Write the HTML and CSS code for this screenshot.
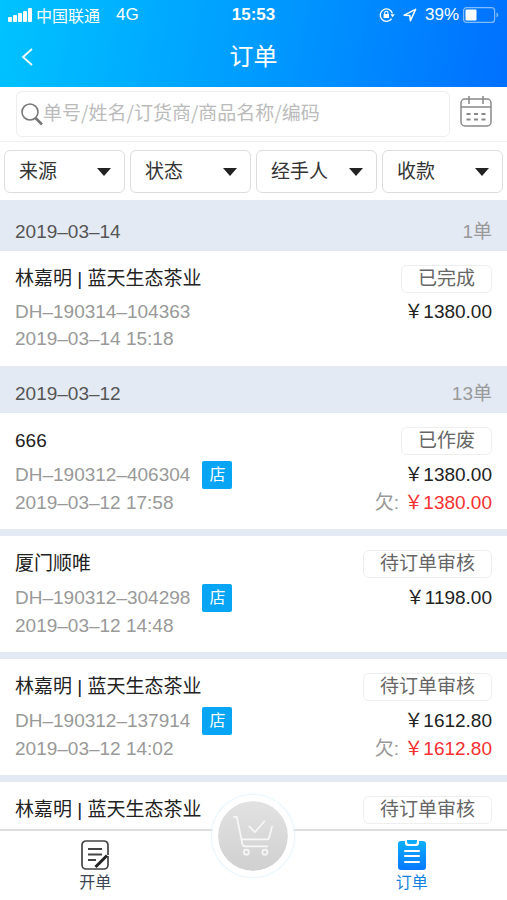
FILE: index.html
```html
<!DOCTYPE html>
<html lang="zh-CN">
<head>
    <meta charset="UTF-8">
    <meta name="viewport" content="width=device-width, initial-scale=1.0">
    <title>订单</title>
    <link rel="stylesheet" href="styles.css">
</head>
<body>
    <header class="header">
        <div class="status-bar">
            <div class="status-left">
                <svg class="signal" viewBox="0 0 24 14" fill="#fff">
                    <rect x="0" y="9" width="4" height="5" rx="1"/>
                    <rect x="5" y="7" width="4" height="7" rx="1"/>
                    <rect x="10" y="5" width="4" height="9" rx="1"/>
                    <rect x="15" y="3" width="4" height="11" rx="1"/>
                    <rect x="20" y="0" width="4" height="14" rx="1"/>
                </svg>
                <span class="carrier">中国联通</span>
                <span class="network">4G</span>
            </div>
            <span class="time">15:53</span>
            <div class="status-right">
                <svg class="lock" viewBox="0 0 16 16" fill="none" stroke="#fff" stroke-width="1.4">
                    <path d="M12.6 11.6A6.2 6.2 0 1 1 13.4 6.4"/>
                    <path d="M11.4 7.2h4.4l-2.2 3z" fill="#fff" stroke="none"/>
                    <rect x="4.6" y="7" width="5.4" height="4" fill="#fff" stroke="none"/>
                    <path d="M5.7 7V5.8a1.6 1.6 0 0 1 3.2 0V7" stroke-width="1.1"/>
                </svg>
                <svg class="location" viewBox="0 0 14 14" fill="none" stroke="#fff" stroke-width="1.5" stroke-linejoin="round">
                    <path d="M1.2 7.2 12.6 1.4 7.4 12.8 6.8 7.4z"/>
                </svg>
                <span>39%</span>
                <svg class="battery" viewBox="0 0 36 16" fill="none">
                    <rect x=".6" y=".6" width="31" height="14.8" rx="3" stroke="#fff" stroke-opacity=".5" stroke-width="1.2"/>
                    <rect x="2.5" y="2.5" width="11" height="11" rx="1" fill="#fff"/>
                    <path d="M33.5 5.5c2.4.8 2.4 4.2 0 5z" fill="#fff" fill-opacity=".5"/>
                </svg>
            </div>
        </div>
        <div class="title-bar">
            <button class="back" type="button" aria-label="返回">
                <svg viewBox="0 0 12 18" fill="none" stroke="#fff" stroke-width="1.8">
                    <path d="M11 1 2 9l9 8"/>
                </svg>
            </button>
            <h1>订单</h1>
        </div>
    </header>

    <form class="search">
        <div class="search-box">
            <svg viewBox="0 0 22 24" fill="none" stroke="#777" stroke-width="1.6">
                <circle cx="9" cy="10" r="8"/>
                <path d="M14.5 16 21 22.5" stroke-width="2.6"/>
            </svg>
            <input type="text" aria-label="搜索订单" placeholder="单号/姓名/订货商/商品名称/编码">
        </div>
        <button class="calendar" type="button" aria-label="选择日期">
            <svg viewBox="0 0 32 32" fill="none" stroke="#888" stroke-width="1.5">
                <rect x="1" y="4" width="30" height="27" rx="4"/>
                <path d="M1 12h30M9 1v8M23 1v8"/>
                <path d="M6.5 19h4M14 19h4M21.5 19h4M6.5 24.5h4M14 24.5h4M21.5 24.5h4" stroke-width="2"/>
            </svg>
        </button>
    </form>

    <div class="filters">
        <label class="filter"><select aria-label="来源"><option>来源</option></select></label>
        <label class="filter"><select aria-label="状态"><option>状态</option></select></label>
        <label class="filter"><select aria-label="经手人"><option>经手人</option></select></label>
        <label class="filter"><select aria-label="收款"><option>收款</option></select></label>
    </div>

    <main class="orders">
        <section>
            <div class="day">
                <h2>2019–03–14</h2>
                <span>1单</span>
            </div>
            <article class="order">
                <div class="row name">
                    <h3>林嘉明 | 蓝天生态茶业</h3>
                    <span class="state">已完成</span>
                </div>
                <div class="row">
                    <span class="number">DH–190314–104363</span>
                    <span class="price">&#xFFE5;1380.00</span>
                </div>
                <div class="row date">
                    <span>2019–03–14 15:18</span>
                </div>
            </article>
        </section>

        <section>
            <div class="day">
                <h2>2019–03–12</h2>
                <span>13单</span>
            </div>
            <article class="order">
                <div class="row name">
                    <h3>666</h3>
                    <span class="state">已作废</span>
                </div>
                <div class="row">
                    <span class="number">DH–190312–406304 <b class="shop">店</b></span>
                    <span class="price">&#xFFE5;1380.00</span>
                </div>
                <div class="row date">
                    <span>2019–03–12 17:58</span>
                    <span>欠: <span class="debt">&#xFFE5;1380.00</span></span>
                </div>
            </article>
            <article class="order">
                <div class="row name">
                    <h3>厦门顺唯</h3>
                    <span class="state">待订单审核</span>
                </div>
                <div class="row">
                    <span class="number">DH–190312–304298 <b class="shop">店</b></span>
                    <span class="price">&#xFFE5;1198.00</span>
                </div>
                <div class="row date">
                    <span>2019–03–12 14:48</span>
                </div>
            </article>
            <article class="order">
                <div class="row name">
                    <h3>林嘉明 | 蓝天生态茶业</h3>
                    <span class="state">待订单审核</span>
                </div>
                <div class="row">
                    <span class="number">DH–190312–137914 <b class="shop">店</b></span>
                    <span class="price">&#xFFE5;1612.80</span>
                </div>
                <div class="row date">
                    <span>2019–03–12 14:02</span>
                    <span>欠: <span class="debt">&#xFFE5;1612.80</span></span>
                </div>
            </article>
            <article class="order">
                <div class="row name">
                    <h3>林嘉明 | 蓝天生态茶业</h3>
                    <span class="state">待订单审核</span>
                </div>
            </article>
        </section>
    </main>

    <nav class="tabs">
        <a class="tab" href="#new">
            <svg viewBox="0 0 28 30" fill="none" stroke="#444" stroke-width="1.7">
                <path d="M27 15V5a4 4 0 0 0-4-4H5a4 4 0 0 0-4 4v20a4 4 0 0 0 4 4h18a4 4 0 0 0 4-4v-9"/>
                <path d="M7 9h14M7 14.5h14M7 20h8" stroke-width="2"/>
                <path d="M14.5 27 26 15.5" stroke="#222" stroke-width="3"/>
            </svg>
            开单
        </a>
        <div class="tab">
            <button class="cart" type="button" aria-label="购物车">
                <svg viewBox="0 0 42 42" fill="none" stroke="#f7f7f7" stroke-width="1.8" stroke-linecap="round" stroke-linejoin="round">
                    <path d="M1 1h3l6 29q.5 2 2.5 2H36"/>
                    <path d="M9 24.5h27q1.5 0 2-2L41 11"/>
                    <path d="M17 11l6 6L33 5.5"/>
                    <circle cx="14" cy="38" r="2.6"/>
                    <circle cx="33.5" cy="38" r="2.6"/>
                </svg>
            </button>
        </div>
        <a class="tab active" href="#orders">
            <svg viewBox="0 0 28 30" fill="none">
                <defs>
                    <linearGradient id="clip" x1="0" y1="0" x2="0" y2="1">
                        <stop offset="0" stop-color="#0cb0ff"/>
                        <stop offset="1" stop-color="#0878ff"/>
                    </linearGradient>
                </defs>
                <rect x="0" y="1" width="28" height="29" rx="3" fill="url(#clip)"/>
                <path d="M7 0h14v3q0 3-3 3h-8q-3 0-3-3z" fill="#fff"/>
                <path d="M9 0h10v2q0 2-2 2h-6q-2 0-2-2z" fill="#0cacff"/>
                <path d="M7 11h14M7 16h14M7 22h14" stroke="#fff" stroke-width="2" stroke-linecap="round"/>
            </svg>
            订单
        </a>
    </nav>
</body>
</html>
```
FILE: styles.css
```css
* {
    box-sizing: border-box;
}

body {
    margin: 0;
    height: 100vh;
    display: flex;
    flex-direction: column;
    background: #fff;
    color: #333;
    font-family: "Liberation Sans", "Noto Sans CJK SC", sans-serif;
    font-size: 19px;
}

h1, h2, h3 {
    margin: 0;
    font-size: inherit;
    font-weight: 400;
}

button {
    padding: 0;
    border: none;
    background: none;
    cursor: pointer;
}

svg {
    display: block;
    flex: none;
}

/* Header */
.header {
    flex: none;
    color: #fff;
    background: linear-gradient(100deg, #00c3ff 0%, #009cff 50%, #0070ff 100%);
}

.status-bar {
    display: grid;
    grid-template-columns: 1fr auto 1fr;
    align-items: center;
    height: 30px;
    padding: 0 8px;
    font-size: 17px;
}

.status-left, .status-right {
    display: flex;
    align-items: center;
}

.status-right {
    justify-content: flex-end;
}

.signal {
    width: 24px;
    height: 14px;
    margin-right: 4px;
}

.carrier {
    margin-right: 16px;
    font-size: 16px;
}

.time {
    font-weight: bold;
}

.lock {
    width: 16px;
    height: 16px;
    margin-right: 8px;
}

.location {
    width: 14px;
    height: 14px;
    margin-right: 8px;
}

.battery {
    width: 36px;
    height: 16px;
    margin-left: 4px;
}

.title-bar {
    display: grid;
    grid-template-columns: 1fr auto 1fr;
    align-items: center;
    height: 57px;
    padding: 0 20px 4px;
}

.title-bar h1 {
    font-size: 24px;
    line-height: 36px;
}

.back {
    justify-self: start;
}

.back svg {
    width: 14px;
    height: 18px;
}

/* Search */
.search {
    flex: none;
    display: flex;
    align-items: flex-start;
    gap: 10px;
    padding: 4px 15px 4px 16px;
    border-bottom: 1px solid #f0f0f0;
}

.search-box {
    flex: 1;
    display: flex;
    align-items: center;
    height: 46px;
    padding: 0 4px;
    border: 1px solid #eee;
    border-radius: 6px;
}

.search-box svg {
    width: 22px;
    height: 24px;
}

.search-box input {
    flex: 1;
    min-width: 0;
    padding: 0;
    border: none;
    outline: none;
    background: none;
    color: #333;
    font: inherit;
}

.search-box input::placeholder {
    color: #bbb;
    font-family: "Noto Sans CJK SC", sans-serif;
}

.calendar {
    padding-top: 4px;
}

.calendar svg {
    width: 32px;
    height: 32px;
}

/* Filters */
.filters {
    flex: none;
    display: flex;
    gap: 5px;
    padding: 8px 4px 7px;
}

.filter {
    position: relative;
    flex: 1;
}

.filter select {
    display: block;
    width: 100%;
    height: 43px;
    padding: 0 14px;
    border: 1px solid #ddd;
    border-radius: 6px;
    background: #fff;
    color: #333;
    font: inherit;
    appearance: none;
}

.filter::after {
    content: "";
    position: absolute;
    top: 18px;
    right: 14px;
    border: 7px solid transparent;
    border-top: 8px solid #222;
    border-bottom: 0;
    pointer-events: none;
}

/* Order list */
.orders {
    flex: 1;
    min-height: 0;
    padding-top: 4px;
    overflow-y: auto;
    scrollbar-width: none;
    background: #e4eaf4;
}

.day {
    display: flex;
    justify-content: space-between;
    padding: 8px 15px 0;
    line-height: 39px;
    color: #999;
}

.day h2 {
    color: #555;
}

.order {
    min-height: 115px;
    padding: 14px 15px 12px;
    background: #fff;
}

.order + .order {
    margin-top: 7px;
}

.row {
    display: flex;
    justify-content: space-between;
    align-items: center;
    line-height: 26px;
    color: #999;
}

.row.name {
    margin-bottom: 6px;
    color: #222;
}

.row.date {
    line-height: 28px;
}

.state {
    padding: 0 16px;
    border: 1px solid #eee;
    border-radius: 6px;
    color: #666;
}

.number {
    display: flex;
    align-items: center;
    gap: 12px;
}

.shop {
    width: 30px;
    border-radius: 2px;
    background: #08a5f5;
    color: #fff;
    font-size: 16px;
    font-weight: 400;
    line-height: 28px;
    text-align: center;
}

.price {
    color: #222;
}

.debt {
    color: #f43030;
}

/* Bottom tabs */
.tabs {
    position: relative;
    flex: none;
    display: flex;
    height: 71px;
    padding: 0 16px;
    border-top: 2px solid #ddd;
    background: #fff;
}

.tab {
    flex: 1;
    display: flex;
    flex-direction: column;
    align-items: center;
    padding-top: 9px;
    color: #3c4555;
    font-size: 16px;
    line-height: 26px;
    text-decoration: none;
}

.tab svg {
    width: 28px;
    height: 30px;
}

.tab.active {
    color: #1280e0;
}

/* Round cart button sits over the top edge of the tab bar */
.cart {
    position: absolute;
    top: -36px;
    width: 82px;
    height: 82px;
    display: flex;
    align-items: center;
    justify-content: center;
    border: 6px solid #fff;
    border-radius: 50%;
    background: linear-gradient(#e2e2e2, #d0d0d0) padding-box;
    box-shadow: 0 0 2px 1px #dff1fa;
}

.tab .cart svg {
    width: 40px;
    height: 40px;
}
```
